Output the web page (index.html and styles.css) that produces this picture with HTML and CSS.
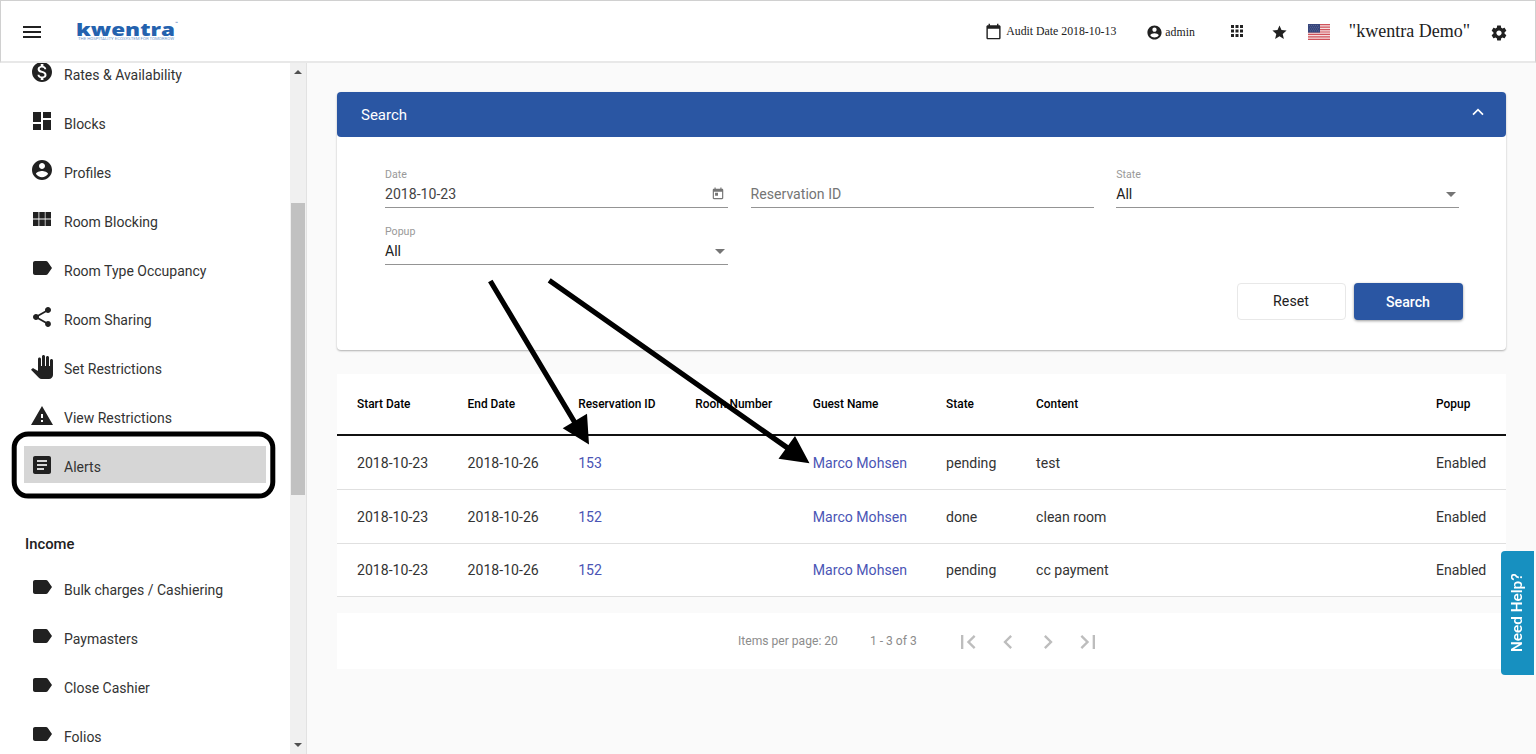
FILE: index.html
```html
<!DOCTYPE html>
<html lang="en">
<head>
  <meta charset="UTF-8" />
  <meta name="viewport" content="width=device-width, initial-scale=1.0" />
  <title>kwentra - Alerts</title>
  <link rel="stylesheet" href="styles.css">
</head>
<body>
  <!-- icon set -->
  <svg class="sprite" xmlns="http://www.w3.org/2000/svg">
    <symbol id="i-money" viewBox="0 0 24 24"><path d="M12 2C6.48 2 2 6.48 2 12s4.480 10 10 10 10-4.480 10-10S17.520 2 12 2zm1.410 16.090V20h-2.670v-1.930c-1.710-.36-3.160-1.460-3.270-3.400h1.960c.1 1.050.82 1.870 2.650 1.870 1.960 0 2.400-.98 2.400-1.590 0-.83-.44-1.610-2.670-2.140-2.480-.6-4.180-1.620-4.180-3.670 0-1.720 1.390-2.840 3.110-3.210V4h2.670v1.950c1.860.45 2.790 1.860 2.850 3.390H14.300c-.05-1.110-.64-1.870-2.220-1.870-1.500 0-2.400.68-2.400 1.640 0 .84.65 1.390 2.670 1.910s4.180 1.390 4.180 3.910c-.01 1.830-1.380 2.830-3.120 3.160z"/></symbol>
    <symbol id="i-dashboard" viewBox="0 0 24 24"><path d="M3 13h8V3H3v10zm0 8h8v-6H3v6zm10 0h8V11h-8v10zm0-18v6h8V3h-8z"/></symbol>
    <symbol id="i-account" viewBox="0 0 24 24"><path d="M12 2C6.480 2 2 6.480 2 12s4.480 10 10 10 10-4.480 10-10S17.520 2 12 2zm0 3c1.660 0 3 1.340 3 3s-1.340 3-3 3-3-1.340-3-3 1.340-3 3-3zm0 14.200c-2.500 0-4.710-1.280-6-3.220.03-1.990 4-3.080 6-3.080 1.990 0 5.970 1.090 6 3.080-1.290 1.940-3.500 3.220-6 3.220z"/></symbol>
    <symbol id="i-module" viewBox="0 0 24 24"><path d="M3 11.500h5.500V5H3v6.500zm0 7.500h5.500v-6.500H3V19zm6.300 0h5.500v-6.500H9.300V19zm6.200 0H21v-6.500h-5.500V19zM9.300 11.500h5.500V5H9.300v6.500zm6.200-6.500v6.500H21V5h-5.500z"/></symbol>
    <symbol id="i-label" viewBox="0 0 24 24"><path d="M17.630 5.840C17.270 5.330 16.670 5 16 5L5 5.010C3.900 5.010 3 5.900 3 7v10c0 1.100.9 1.990 2 1.990L16 19c.67 0 1.270-.33 1.630-.84L22 12l-4.370-6.160z"/></symbol>
    <symbol id="i-share" viewBox="0 0 24 24"><path d="M18 16.080c-.76 0-1.440.3-1.960.77L8.910 12.700c.05-.23.09-.46.09-.7s-.04-.47-.09-.7l7.050-4.110c.54.5 1.250.81 2.040.81 1.660 0 3-1.340 3-3s-1.340-3-3-3-3 1.340-3 3c0 .24.04.47.09.7L8.040 9.810C7.500 9.310 6.790 9 6 9c-1.660 0-3 1.340-3 3s1.340 3 3 3c.79 0 1.500-.31 2.040-.81l7.120 4.160c-.05.21-.08.43-.08.65 0 1.610 1.310 2.920 2.920 2.920s2.920-1.310 2.920-2.920-1.310-2.920-2.920-2.920z"/></symbol>
    <symbol id="i-hand" viewBox="0 0 24 24"><path d="M23 5.500V20c0 2.200-1.800 4-4 4h-7.300c-1.080 0-2.100-.43-2.850-1.190L1 14.830s1.260-1.230 1.300-1.250c.22-.19.49-.29.79-.29.22 0 .42.06.6.16.04.01 4.310 2.460 4.310 2.460V4c0-.83.67-1.500 1.500-1.500S11 3.170 11 4v7h1V1.500c0-.83.67-1.500 1.500-1.500S15 .67 15 1.500V11h1V2.500c0-.83.67-1.500 1.500-1.500s1.500.67 1.500 1.500V11h1V5.500c0-.83.67-1.500 1.500-1.500s1.500.67 1.500 1.500z"/></symbol>
    <symbol id="i-warning" viewBox="0 0 24 24"><path d="M1 21h22L12 2 1 21zm12-3h-2v-2h2v2zm0-4h-2v-4h2v4z"/></symbol>
    <symbol id="i-article" viewBox="0 0 24 24"><path d="M19 3H5c-1.100 0-2 .9-2 2v14c0 1.100.9 2 2 2h14c1.100 0 2-.9 2-2V5c0-1.100-.9-2-2-2zm-5 14H7v-2h7v2zm3-4H7v-2h10v2zm0-4H7V7h10v2z"/></symbol>
    <symbol id="i-calendar" viewBox="0 0 24 24"><path d="M20 3h-1V1h-2v2H7V1H5v2H4c-1.100 0-2 .9-2 2v16c0 1.100.9 2 2 2h16c1.100 0 2-.9 2-2V5c0-1.100-.9-2-2-2zm0 18H4V8h16v13z"/></symbol>
    <symbol id="i-today" viewBox="0 0 24 24"><path d="M19 3h-1V1h-2v2H8V1H6v2H5c-1.110 0-1.990.9-1.990 2L3 19c0 1.100.89 2 2 2h14c1.100 0 2-.9 2-2V5c0-1.100-.9-2-2-2zm0 16H5V8h14v11zM7 10h5v5H7z"/></symbol>
    <symbol id="i-apps" viewBox="0 0 24 24"><path d="M4 8h4V4H4v4zm6 12h4v-4h-4v4zm-6 0h4v-4H4v4zm0-6h4v-4H4v4zm6 0h4v-4h-4v4zm6-10v4h4V4h-4zm-6 4h4V4h-4v4zm6 6h4v-4h-4v4zm0 6h4v-4h-4v4z"/></symbol>
    <symbol id="i-star" viewBox="0 0 24 24"><path d="M12 17.270L18.180 21l-1.640-7.030L22 9.240l-7.190-.61L12 2 9.190 8.630 2 9.240l5.460 4.730L5.820 21z"/></symbol>
    <symbol id="i-settings" viewBox="0 0 24 24"><path d="M19.430 12.980c.04-.32.07-.64.07-.98s-.03-.66-.07-.98l2.110-1.650c.19-.15.24-.42.12-.64l-2-3.460c-.12-.22-.39-.3-.61-.22l-2.490 1c-.52-.4-1.080-.73-1.690-.98l-.38-2.650C14.460 2.180 14.250 2 14 2h-4c-.25 0-.46.18-.49.42l-.38 2.650c-.61.25-1.170.59-1.690.98l-2.490-1c-.23-.09-.49 0-.61.22l-2 3.460c-.13.22-.07.49.12.64l2.110 1.650c-.04.32-.07.65-.07.98s.03.66.07.98l-2.110 1.650c-.19.15-.24.42-.12.64l2 3.460c.12.22.39.3.61.22l2.490-1c.52.4 1.080.73 1.690.98l.38 2.650c.03.24.24.42.49.42h4c.25 0 .46-.18.49-.42l.38-2.650c.61-.25 1.170-.59 1.690-.98l2.490 1c.23.09.49 0 .61-.22l2-3.460c.12-.22.07-.49-.12-.64l-2.110-1.650zM12 15.500c-1.930 0-3.500-1.570-3.500-3.500s1.570-3.500 3.500-3.500 3.500 1.570 3.500 3.500-1.570 3.500-3.500 3.500z"/></symbol>
    <symbol id="i-first" viewBox="0 0 24 24"><path d="M18.410 16.590L13.820 12l4.590-4.590L17 6l-6 6 6 6zM6 6h2v12H6z"/></symbol>
    <symbol id="i-prev" viewBox="0 0 24 24"><path d="M15.410 7.410L14 6l-6 6 6 6 1.410-1.410L10.830 12z"/></symbol>
    <symbol id="i-next" viewBox="0 0 24 24"><path d="M10 6L8.590 7.410 13.170 12l-4.580 4.590L10 18l6-6z"/></symbol>
    <symbol id="i-last" viewBox="0 0 24 24"><path d="M5.590 7.410L10.180 12l-4.590 4.590L7 18l6-6-6-6zM16 6h2v12h-2z"/></symbol>
  </svg>

  <header class="header">
    <div class="menu-button"><span></span><span></span><span></span></div>
    <svg class="logo" width="106" height="24" viewBox="0 0 106 24">
      <text class="logo-name" x="0" y="16.500" textLength="99" lengthAdjust="spacingAndGlyphs">kwentra</text>
      <text class="logo-tm" x="99" y="6" textLength="5">™</text>
      <text class="logo-tag" x="2" y="21" textLength="96" lengthAdjust="spacingAndGlyphs">THE HOSPITALITY ECOSYSTEM FOR TOMORROW</text>
    </svg>
    <div class="toolbar">
      <div class="audit"><svg class="icon"><use href="#i-calendar"/></svg><span>Audit Date 2018-10-13</span></div>
      <div class="user"><svg class="icon"><use href="#i-account"/></svg><span>admin</span></div>
      <svg class="icon apps"><use href="#i-apps"/></svg>
      <svg class="icon star"><use href="#i-star"/></svg>
      <svg class="flag" width="22" height="16" viewBox="0 0 22 16">
        <rect width="22" height="16" fill="#f6dfe0"/>
        <path d="M0 .6h22M0 3.070h22M0 5.530h22M0 8h22M0 10.450h22M0 12.900h22M0 15.400h22" stroke="#d0535b" stroke-width="1.200"/>
        <rect width="12" height="8.600" fill="#37467c"/>
        <path d="M1 1.500h10M2 3.300h9M1 5.100h10M2 6.900h9" stroke="#7a86ae" stroke-width=".6" stroke-dasharray=".8 1.200"/>
      </svg>
      <span class="hotel">"kwentra Demo"</span>
      <svg class="icon settings"><use href="#i-settings"/></svg>
    </div>
  </header>

  <div class="layout">
    <aside class="sidebar">
      <nav class="nav">
        <a class="nav-item"><svg class="icon"><use href="#i-money"/></svg><span>Rates &amp; Availability</span></a>
        <a class="nav-item"><svg class="icon"><use href="#i-dashboard"/></svg><span>Blocks</span></a>
        <a class="nav-item"><svg class="icon"><use href="#i-account"/></svg><span>Profiles</span></a>
        <a class="nav-item"><svg class="icon"><use href="#i-module"/></svg><span>Room Blocking</span></a>
        <a class="nav-item"><svg class="icon"><use href="#i-label"/></svg><span>Room Type Occupancy</span></a>
        <a class="nav-item"><svg class="icon"><use href="#i-share"/></svg><span>Room Sharing</span></a>
        <a class="nav-item"><svg class="icon"><use href="#i-hand"/></svg><span>Set Restrictions</span></a>
        <a class="nav-item"><svg class="icon"><use href="#i-warning"/></svg><span>View Restrictions</span></a>
        <a class="nav-item active"><svg class="icon"><use href="#i-article"/></svg><span>Alerts</span></a>
        <h3 class="nav-title">Income</h3>
        <a class="nav-item"><svg class="icon"><use href="#i-label"/></svg><span>Bulk charges / Cashiering</span></a>
        <a class="nav-item"><svg class="icon"><use href="#i-label"/></svg><span>Paymasters</span></a>
        <a class="nav-item"><svg class="icon"><use href="#i-label"/></svg><span>Close Cashier</span></a>
        <a class="nav-item"><svg class="icon"><use href="#i-label"/></svg><span>Folios</span></a>
      </nav>
      <div class="scrollbar">
        <div class="arrow-up"></div>
        <div class="thumb"></div>
        <div class="arrow-down"></div>
      </div>
    </aside>

    <main class="content">
      <section class="panel">
        <div class="panel-header">
          <span>Search</span>
          <svg width="12" height="8" viewBox="0 0 12 8"><path d="M1 6.700L6 1.700l5 5" fill="none" stroke="#fff" stroke-width="1.700"/></svg>
        </div>
        <div class="fields">
          <div class="field">
            <label>Date</label>
            <div class="value">2018-10-23<svg class="icon today"><use href="#i-today"/></svg></div>
          </div>
          <div class="field">
            <label></label>
            <div class="value placeholder">Reservation ID</div>
          </div>
          <div class="field">
            <label>State</label>
            <div class="value dark">All<i class="caret"></i></div>
          </div>
          <div class="field">
            <label>Popup</label>
            <div class="value dark">All<i class="caret"></i></div>
          </div>
        </div>
        <div class="actions">
          <button class="btn">Reset</button>
          <button class="btn btn-primary">Search</button>
        </div>
      </section>

      <table class="table">
        <colgroup>
          <col class="c-start"><col class="c-end"><col class="c-res"><col class="c-room"><col class="c-guest"><col class="c-state"><col class="c-content"><col class="c-popup">
        </colgroup>
        <thead>
          <tr><th>Start Date</th><th>End Date</th><th>Reservation ID</th><th>Room Number</th><th>Guest Name</th><th>State</th><th>Content</th><th>Popup</th></tr>
        </thead>
        <tbody>
          <tr><td>2018-10-23</td><td>2018-10-26</td><td><a>153</a></td><td></td><td><a>Marco Mohsen</a></td><td>pending</td><td>test</td><td>Enabled</td></tr>
          <tr><td>2018-10-23</td><td>2018-10-26</td><td><a>152</a></td><td></td><td><a>Marco Mohsen</a></td><td>done</td><td>clean room</td><td>Enabled</td></tr>
          <tr><td>2018-10-23</td><td>2018-10-26</td><td><a>152</a></td><td></td><td><a>Marco Mohsen</a></td><td>pending</td><td>cc payment</td><td>Enabled</td></tr>
        </tbody>
      </table>

      <div class="paginator">
        <span class="per-page">Items per page: 20</span>
        <span class="range">1 - 3 of 3</span>
        <div class="pages">
          <svg class="icon"><use href="#i-first"/></svg>
          <svg class="icon"><use href="#i-prev"/></svg>
          <svg class="icon"><use href="#i-next"/></svg>
          <svg class="icon"><use href="#i-last"/></svg>
        </div>
      </div>
    </main>
  </div>

  <div class="help-tab">Need Help?</div>

  <!-- annotations over the page -->
  <svg class="marks" width="1536" height="754" viewBox="0 0 1536 754">
    <rect x="14.200" y="434" width="258.600" height="62" rx="14" fill="none" stroke="#000" stroke-width="5"/>
    <path d="M490.300 281L577.500 427M549.200 280.300L790.500 450" stroke="#000" stroke-width="5.200"/>
    <path d="M589 444.500L562.700 428.300 587 413.800zM809.500 463.200L778.500 458.800 795 436z"/>
  </svg>
</body>
</html>
```

FILE: styles.css
```css
* {
  box-sizing: border-box;
}

body {
  font-family: Roboto, sans-serif;
  margin: 0;
  height: 754px;
  overflow: hidden;
  background: #fafafa;
  color: #333;
}

.sprite {
  display: none;
}

.icon {
  width: 24px;
  height: 24px;
  fill: #212121;
  flex-shrink: 0;
}

/* header */
.header {
  height: 63px;
  display: flex;
  align-items: center;
  padding-left: 22px;
  background: #fff;
  border: 1px solid #d0d0d0;
  border-bottom: 2px solid #e8e8e8;
}

.menu-button {
  width: 18px;
  display: flex;
  flex-direction: column;
  gap: 3px;
  padding-top: 2px;
}

.menu-button span {
  height: 2px;
  background: #212121;
  margin-bottom: 0.3px;
}

.logo {
  margin-left: 35px;
  margin-bottom: 1px;
  overflow: visible;
}

.logo-name {
  font-family: "Open Sans", sans-serif;
  font-size: 17.5px;
  font-weight: 800;
  fill: #2462ae;
}

.logo-tm {
  font-size: 5px;
  fill: #2462ae;
}

.logo-tag {
  font-size: 3px;
  fill: #6f98cc;
}

.toolbar {
  margin-left: auto;
  display: flex;
  align-items: center;
  font-family: "Liberation Serif", serif;
  color: #212121;
  padding-right: 27px;
}

.audit,
.user {
  display: flex;
  align-items: center;
  font-size: 11.8px;
}

.audit .icon {
  width: 17px;
  height: 17px;
  margin-right: 4px;
}

.user {
  margin-left: 30px;
  padding-top: 2px;
}

.user .icon {
  width: 17px;
  height: 17px;
  margin-right: 2px;
}

.apps {
  width: 18px;
  height: 18px;
  margin-left: 33px;
}

.star {
  width: 17px;
  height: 17px;
  margin-left: 25px;
  margin-top: 2px;
}

.flag {
  margin-left: 20px;
  margin-top: 1px;
}

.hotel {
  font-size: 18px;
  margin-left: 19px;
}

.settings {
  width: 18px;
  height: 18px;
  margin-left: 20px;
  margin-top: 3px;
}

/* sidebar */
.layout {
  display: flex;
  height: 691px;
}

.sidebar {
  width: 307px;
  display: flex;
  justify-content: space-between;
  background: #fff;
  border-right: 1px solid #e2e2e2;
  overflow: hidden;
  flex-shrink: 0;
}

.nav {
  width: 242px;
  margin-left: 24px;
  margin-top: -9.8px;
}

.nav-item {
  display: flex;
  align-items: center;
  height: 37.5px;
  margin-bottom: 11.6px;
  padding-left: 6px;
  font-size: 14px;
}

.nav-item .icon {
  margin-right: 10px;
}

.nav-item span {
  padding-top: 5.2px;
}

.nav-item.active {
  background: #d6d6d6;
}

.nav-title {
  margin: 38.7px 0 14.2px 1px;
  padding-top: 12px;
  line-height: 20px;
  font-size: 14.8px;
  font-weight: 500;
  color: #212121;
}

.scrollbar {
  width: 16px;
  height: 691px;
  padding: 7px 1px 7px;
  display: flex;
  flex-direction: column;
  align-items: center;
  background: #f0f0f0;
}

.arrow-up,
.arrow-down {
  border: 4px solid transparent;
}

.arrow-up {
  border-top: 0;
  border-bottom-color: #505050;
}

.arrow-down {
  border-bottom: 0;
  border-top-color: #505050;
  margin-top: auto;
}

.thumb {
  width: 14px;
  height: 292px;
  margin-top: 129px;
  background: #c1c1c1;
}

/* search panel */
.content {
  width: 1169px;
  margin: 29px 0 0 30px;
}

.panel {
  height: 258px;
  background: #fff;
  border-radius: 4px;
  box-shadow: 0 1px 2px rgba(0,0,0,0.3);
}

.panel-header {
  height: 45px;
  display: flex;
  justify-content: space-between;
  align-items: center;
  padding: 0 22px 0 24px;
  background: #2a56a3;
  color: #fff;
  border-radius: 4px;
  font-size: 15px;
}

.panel-header svg {
  margin-bottom: 6px;
}

.fields {
  display: grid;
  grid-template-columns: repeat(3, 343px);
  column-gap: 22.6px;
  row-gap: 17px;
  padding: 31px 48px 0;
}

.field {
  height: 40px;
  border-bottom: 1px solid #949494;
}

.field label {
  display: block;
  height: 13px;
  line-height: 13px;
  font-size: 10.6px;
  color: #999;
}

.field .value {
  display: flex;
  align-items: center;
  justify-content: space-between;
  height: 24px;
  padding-top: 2px;
  font-size: 14.1px;
  color: #444;
}

.field .placeholder {
  color: #757575;
}

.field .dark {
  color: #212121;
}

.field .today {
  width: 14px;
  height: 14px;
  margin-right: 3px;
  fill: #757575;
}

.caret {
  border: 5px solid transparent;
  border-top-color: #757575;
  border-bottom: 0;
  margin-right: 3px;
}

.actions {
  display: flex;
  justify-content: flex-end;
  gap: 8px;
  padding: 18px 43.5px 0 0;
}

.btn {
  width: 109px;
  height: 37px;
  padding-bottom: 2px;
  font-family: Roboto, sans-serif;
  font-size: 14.2px;
  color: #212121;
  background: #fff;
  border: 1px solid #e8e8e8;
  border-radius: 4px;
}

.btn-primary {
  color: #fff;
  background: #2a56a3;
  border: none;
  padding-bottom: 1px;
  font-weight: 500;
  box-shadow: 0 1px 3px rgba(0,0,0,0.4);
}

/* alerts table */
.table {
  width: 1169px;
  margin-top: 24px;
  table-layout: fixed;
  border-collapse: separate;
  border-spacing: 0;
  background: #fff;
}

.c-start { width: 130.6px; }
.c-end { width: 110.6px; }
.c-res { width: 117px; }
.c-room { width: 117.6px; }
.c-guest { width: 133.3px; }
.c-state { width: 90px; }
.c-content { width: 400px; }

.table th,
.table td {
  padding: 0;
  text-align: left;
  white-space: nowrap;
}

.table th {
  height: 62px;
  font-size: 11.9px;
  font-weight: 500;
  color: #000;
  border-bottom: 2px solid #111;
}

.table td {
  height: 54px;
  font-size: 14.1px;
  border-bottom: 1px solid #e0e0e0;
}

.table tr:last-child td {
  height: 53px;
}

.table th:first-child,
.table td:first-child {
  padding-left: 20px;
}

.table a {
  color: #4a55b5;
}

/* paginator */
.paginator {
  height: 56px;
  margin-top: 16px;
  display: flex;
  align-items: center;
  padding-left: 401px;
  background: #fff;
  font-size: 12.1px;
  color: #8c8c8c;
}

.range {
  margin-left: 32px;
}

.pages {
  display: flex;
  gap: 12px;
  margin-left: 37px;
  padding-top: 2px;
}

.pages .icon {
  width: 28px;
  height: 28px;
  fill: #bdbdbd;
}

.help-tab {
  position: fixed;
  right: 2px;
  top: 551px;
  width: 33px;
  height: 124px;
  display: flex;
  align-items: center;
  justify-content: center;
  writing-mode: vertical-rl;
  transform: rotate(180deg);
  background: #1790c0;
  color: #fff;
  border-radius: 0 4px 4px 0;
  font-size: 15.3px;
  font-weight: 500;
}

.marks {
  position: absolute;
  left: 0;
  top: 0;
  pointer-events: none;
}
```
